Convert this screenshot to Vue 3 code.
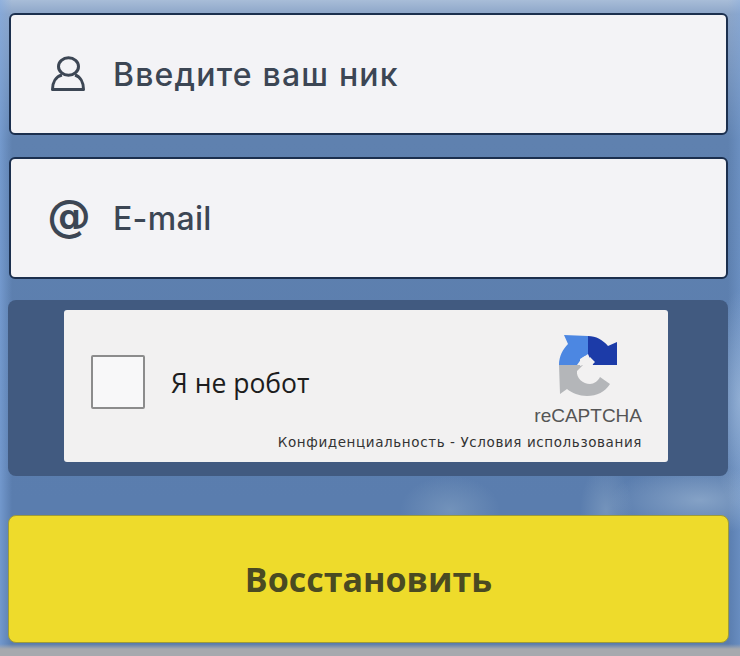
<script setup>
const fields = [
  { id: 'nick', text: 'Введите ваш ник', at: false },
  { id: 'mail', text: 'E-mail', at: true }
]
</script>

<template>
  <main class="page">
    <div v-for="f in fields" :key="f.id" class="field">
      <span v-if="f.at" class="at">@</span>
      <svg v-else class="user" viewBox="0 0 36 36" fill="none" stroke="#3c4654" stroke-width="3">
        <ellipse cx="18.500" cy="10.500" rx="10" ry="8.800" />
        <path d="M12 19C6 20.500 2.500 26 2.500 33.500H33.500C33.500 26 30 20.500 25 19" stroke-linejoin="round" />
      </svg>
      <span class="label" :class="{ tight: f.at }">{{ f.text }}</span>
    </div>

    <section class="panel">
      <div class="card">
        <div class="row">
          <span class="box"></span>
          <span class="robot">Я не робот</span>
          <div class="brand">
            <svg class="logo" viewBox="0 0 60 63">
              <path fill="#b4b6b9" d="M1 31H25L19 37C18 44 25 50 32 50C36 50 40 47 42 43L52 50C47 58 39 62 29 62C21 62 14 59 9 55L2 60Z" />
              <path fill="#4c87e2" d="M6 1L30 2V20L24 24L19 31H1C1 22 5 15 10 10Z" />
              <path fill="#1c3ba8" d="M30 2C38 2 45 6 50 12L59 8V31H35L30 20Z" />
              <path fill="#f2f1f1" d="M22 25L27 22L30 26L32 23L37 28L34 31H25L22 32Z" />
            </svg>
            <span class="name">reCAPTCHA</span>
          </div>
        </div>
        <div class="terms">Конфиденциальность - Условия использования</div>
      </div>
    </section>

    <button class="submit" type="button">Восстановить</button>
  </main>
</template>

<style scoped>
.page {
  width: 740px;
  height: 656px;
  box-sizing: border-box;
  padding: 13px 12px 13px 8px;
  display: flex;
  flex-direction: column;
  background:
    linear-gradient(180deg, transparent 644px, #a6a9ae 649px),
    radial-gradient(ellipse 50px 34px at 450px 510px, rgba(170, 195, 215, 0.3), transparent),
    radial-gradient(ellipse 26px 46px at 606px 510px, rgba(175, 198, 218, 0.3), transparent),
    radial-gradient(ellipse 90px 34px at 700px 500px, rgba(175, 198, 222, 0.5), transparent),
    radial-gradient(ellipse 30px 110px at 740px 400px, rgba(170, 195, 225, 0.6), transparent),
    linear-gradient(90deg, rgba(130, 170, 225, 0.6), transparent 12px),
    linear-gradient(270deg, rgba(130, 170, 225, 0.35), transparent 12px),
    linear-gradient(180deg, #a8bdd8 0, #8ca5c8 14px, #5f81af 140px, #5a7dae 500px);
  font-family: "Inter", "Noto Sans", sans-serif;
}
.field {
  height: 122px;
  box-sizing: border-box;
  margin: 0 0 22px 1px;
  padding-left: 39px;
  display: flex;
  align-items: center;
  border: 2px solid #1b2f4e;
  border-radius: 6px;
  background: #f3f3f6;
  color: #3c4654;
}
.user {
  width: 36px;
  height: 36px;
  margin: 0 27px 0 0;
  flex: none;
}
.at {
  width: 44px;
  margin: -4px 22px 0 -3px;
  flex: none;
  font-family: "DejaVu Sans", sans-serif;
  font-size: 44px;
  font-weight: 700;
  line-height: 1;
  text-align: center;
}
.label {
  padding-top: 2px;
  font-size: 32px;
  font-weight: 500;
  line-height: 1;
  letter-spacing: 1.2px;
}
.tight {
  letter-spacing: 0.3px;
}
.panel {
  height: 176px;
  box-sizing: border-box;
  margin: -1px 0 39px;
  padding: 10px 60px 14px 56px;
  border-radius: 8px;
  background: #415a80;
}
.card {
  height: 152px;
  box-sizing: border-box;
  padding: 0 26px 0 27px;
  display: flex;
  flex-direction: column;
  border-radius: 3px;
  background: #f2f1f1;
  color: #1d1d1d;
}
.row {
  flex: 1;
  display: flex;
  align-items: center;
}
.box {
  width: 50px;
  height: 50px;
  margin-top: 20px;
  flex: none;
  border: 2px solid #8c8c8c;
  border-radius: 2px;
  background: #f8f8f9;
}
.robot {
  margin: 22px 0 0 26px;
  font-family: "Open Sans", sans-serif;
  font-size: 26.500px;
  font-weight: 400;
}
.brand {
  margin: 0 0 0 auto;
  padding-top: 15px;
  display: flex;
  flex-direction: column;
  align-items: center;
}
.logo {
  width: 60px;
  height: 63px;
}
.name {
  margin-top: 8px;
  font-family: "Liberation Sans", sans-serif;
  font-size: 19px;
  line-height: 21px;
  color: #555;
}
.terms {
  margin: 0 0 12px;
  font-family: "DejaVu Sans", sans-serif;
  font-size: 13.500px;
  line-height: 16px;
  letter-spacing: 0.6px;
  text-align: right;
  white-space: nowrap;
  color: #333;
}
.submit {
  height: 128px;
  margin: 0 -1px 0 0;
  padding: 0;
  border: 1px solid #9d9a3a;
  border-radius: 8px;
  background: #eedb2b;
  color: #4a4a22;
  font-family: "Open Sans", sans-serif;
  font-size: 34px;
  font-weight: 700;
}
</style>
